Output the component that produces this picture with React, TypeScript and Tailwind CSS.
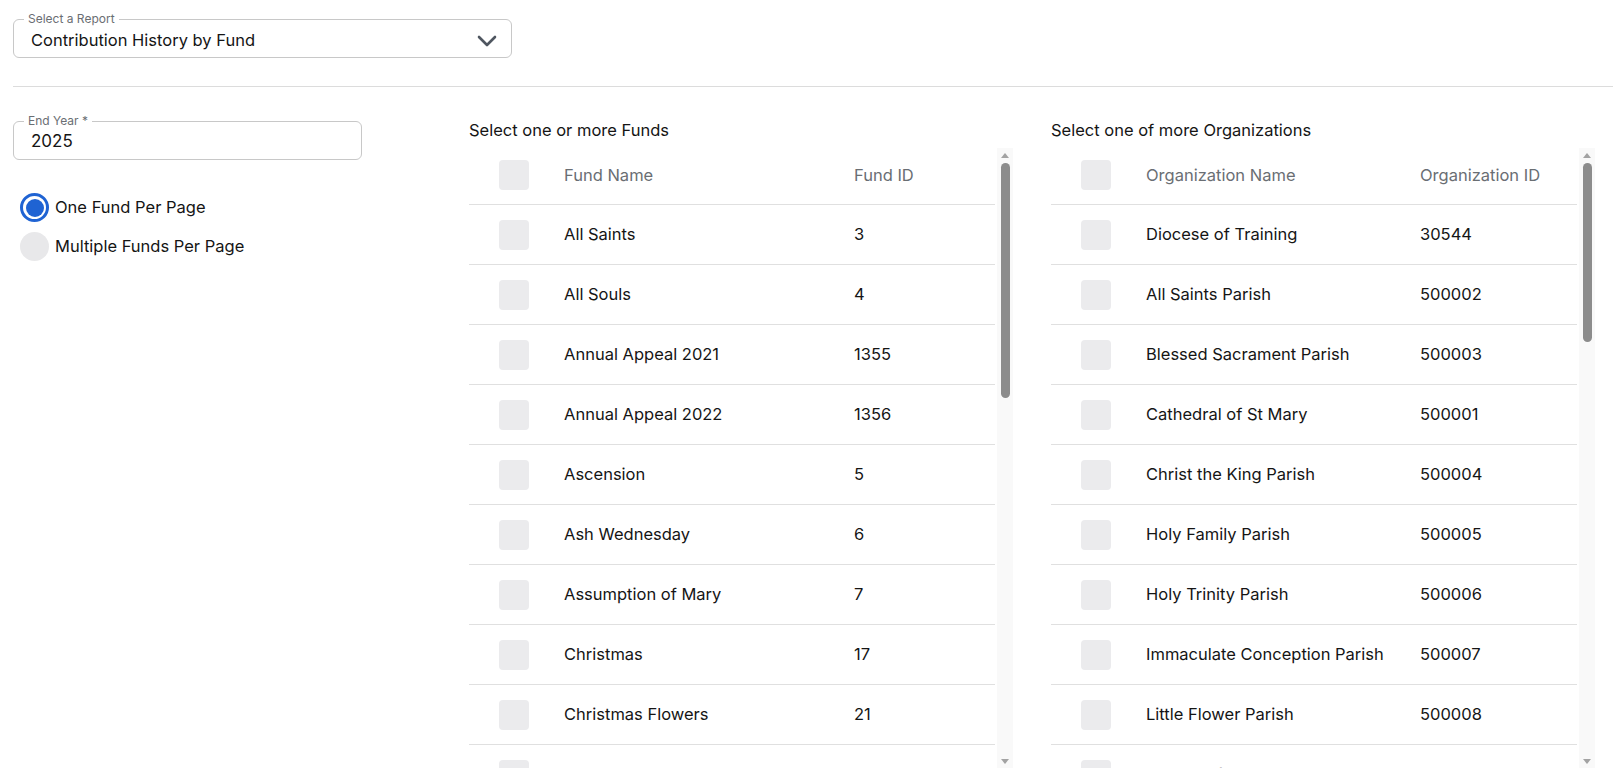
import React from "react";

const funds: [string, string][] = [
  ["All Saints", "3"],
  ["All Souls", "4"],
  ["Annual Appeal 2021", "1355"],
  ["Annual Appeal 2022", "1356"],
  ["Ascension", "5"],
  ["Ash Wednesday", "6"],
  ["Assumption of Mary", "7"],
  ["Christmas", "17"],
  ["Christmas Flowers", "21"],
  ["Easter", "8"],
  ["Easter Flowers", "22"],
];

const orgs: [string, string][] = [
  ["Diocese of Training", "30544"],
  ["All Saints Parish", "500002"],
  ["Blessed Sacrament Parish", "500003"],
  ["Cathedral of St Mary", "500001"],
  ["Christ the King Parish", "500004"],
  ["Holy Family Parish", "500005"],
  ["Holy Trinity Parish", "500006"],
  ["Immaculate Conception Parish", "500007"],
  ["Little Flower Parish", "500008"],
  ["Mother of Perpetual Help", "500009"],
  ["Our Lady of Lourdes", "500010"],
];

function Checkbox() {
  return <div className="w-[30px] h-[30px] rounded-[4px] bg-[#ebebed] shrink-0" />;
}

function ScrollTrack({ thumb }: { thumb: number }) {
  return (
    <div className="w-[16px] shrink-0 h-full flex flex-col items-center bg-[#f9f9f9]">
      <div className="h-[14px] w-full flex items-center justify-center">
        <div className="w-0 h-0 border-x-[4px] border-x-transparent border-b-[5px] border-b-[#a3a3a3]" />
      </div>
      <div className="w-[9px] rounded-full bg-[#8c8c8c] mt-[1px]" style={{ height: thumb }} />
      <div className="flex-1" />
      <div className="h-[14px] w-full flex items-center justify-center">
        <div className="w-0 h-0 border-x-[4px] border-x-transparent border-t-[5px] border-t-[#a3a3a3]" />
      </div>
    </div>
  );
}

function DataTable({
  title,
  nameHeader,
  idHeader,
  rows,
  idOffset,
  thumb,
}: {
  title: string;
  nameHeader: string;
  idHeader: string;
  rows: [string, string][];
  idOffset: number;
  thumb: number;
}) {
  return (
    <div className="flex-1 flex flex-col min-w-0">
      <div className="h-[30px] leading-[24px] text-[16.5px] text-[#151515]">{title}</div>
      <div className="h-[620px] flex overflow-hidden">
        <div className="flex-1 min-w-0 overflow-hidden pr-[2px]">
          <div className="h-[57px] flex items-start pt-[12px] border-b border-[#e0e0e0]">
            <div className="w-[30px] shrink-0" />
            <Checkbox />
            <div className="w-[35px] shrink-0" />
            <div
              className="h-[30px] flex items-center text-[16.5px] text-[#6a6e73] shrink-0"
              style={{ width: idOffset - 95 }}
            >
              {nameHeader}
            </div>
            <div className="h-[30px] flex items-center text-[16.5px] text-[#6a6e73]">{idHeader}</div>
          </div>
          {rows.map(([n, id]) => (
            <div key={n} className="h-[60px] flex items-center border-b border-[#e0e0e0]">
              <div className="w-[30px] shrink-0" />
              <Checkbox />
              <div className="w-[35px] shrink-0" />
              <div className="text-[16.5px] text-[#151515] shrink-0" style={{ width: idOffset - 95 }}>
                {n}
              </div>
              <div className="text-[16.5px] text-[#151515]">{id}</div>
            </div>
          ))}
        </div>
        <ScrollTrack thumb={thumb} />
      </div>
    </div>
  );
}

export default function App() {
  return (
    <div
      className="w-full h-[768px] overflow-hidden bg-white text-[#151515]"
      style={{ fontFamily: "Inter, 'Noto Sans', sans-serif" }}
    >
      <div className="pt-[19px] pl-[13px]">
        <div className="relative w-[499px] h-[39px] border border-[#c8c8c8] rounded-[6px] flex items-center pl-[17px] pr-[14px] pt-[3px]">
          <div className="absolute -top-[9px] left-[10px] px-[4px] bg-white text-[12px] leading-[16px] text-[#6a6e73]">
            Select a Report
          </div>
          <div className="flex-1 text-[16.5px] text-[#151515]">Contribution History by Fund</div>
          <svg width="20" height="12" viewBox="0 0 20 12" className="mb-[-2px]">
            <path d="M2 2 L10 10 L18 2" fill="none" stroke="#4f5660" strokeWidth="2.6" strokeLinecap="round" strokeLinejoin="round" />
          </svg>
        </div>
      </div>
      <div className="ml-[13px] mt-[28px] h-px bg-[#dcdcdc]" />
      <div className="flex pl-[13px] pr-[18px] pt-[31px] gap-[38px]">
        <div className="w-[418px] shrink-0">
          <div className="relative mt-[3px] w-[349px] h-[39px] border border-[#c8c8c8] rounded-[6px] flex items-center pl-[17px] pt-[2px]">
            <div className="absolute -top-[9px] left-[10px] px-[4px] bg-white text-[12px] leading-[16px] text-[#6a6e73]">
              End Year *
            </div>
            <div className="text-[17px] text-[#151515]">2025</div>
          </div>
          <div className="mt-[33px] flex flex-col gap-[10px] pl-[7px]">
            <div className="flex items-center gap-[6px]">
              <div className="w-[29px] h-[29px] rounded-full border-[3px] border-[#1f63d3] bg-white flex items-center justify-center">
                <div className="w-[18px] h-[18px] rounded-full bg-[#1f63d3]" />
              </div>
              <div className="text-[16.5px] text-[#151515]">One Fund Per Page</div>
            </div>
            <div className="flex items-center gap-[6px]">
              <div className="w-[29px] h-[29px] rounded-full bg-[#e8e8ea]" />
              <div className="text-[16.5px] text-[#151515]">Multiple Funds Per Page</div>
            </div>
          </div>
        </div>
        <DataTable
          title="Select one or more Funds"
          nameHeader="Fund Name"
          idHeader="Fund ID"
          rows={funds}
          idOffset={385}
          thumb={235}
        />
        <DataTable
          title="Select one of more Organizations"
          nameHeader="Organization Name"
          idHeader="Organization ID"
          rows={orgs}
          idOffset={369}
          thumb={179}
        />
      </div>
    </div>
  );
}
